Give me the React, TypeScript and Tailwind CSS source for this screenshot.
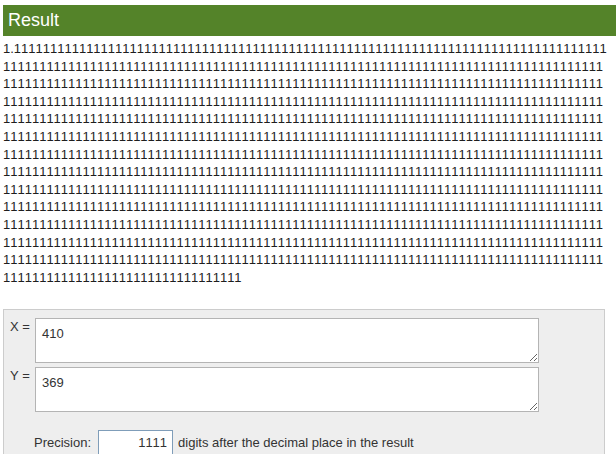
import { useState } from 'react';

const result = '1.' + '1'.repeat(1111);

export default function App() {
  const [x, setX] = useState('410');
  const [y, setY] = useState('369');
  const [precision, setPrecision] = useState('1111');

  return (
    <div className="w-[616px] h-[454px] overflow-hidden bg-white font-['Liberation_Sans',Arial,sans-serif] text-[#222] [font-kerning:none]">
      <div className="pt-[5px] pl-[3px]">
        <h2 className="h-[31px] bg-[#548329] pl-[5px] text-[18px] leading-[31px] text-white">
          Result
        </h2>
      </div>

      <div className="mt-[4px] w-[608px] pl-[3px] break-all text-[13px] leading-[17.6px] text-[#1e1e1e]">
        {result}
      </div>

      <form className="mt-[23px] ml-[3px] w-[602px] border border-[#cccccc] bg-[#eeeeee] pt-[8px] pl-[6px] pb-4 text-[13px] text-[#333]">
        <div className="flex items-start gap-[4px]">
          <label className="w-[21px] pt-[1px] leading-[15px] whitespace-nowrap">X =</label>
          <textarea
            value={x}
            onChange={(e) => setX(e.target.value)}
            className="h-[45px] w-[504px] border border-[#b4b4b4] bg-white px-[6px] pt-[7px] text-[13px] leading-[15px] text-[#333] outline-none"
          />
        </div>
        <div className="mt-[4px] flex items-start gap-[4px]">
          <label className="w-[21px] pt-[1px] leading-[15px] whitespace-nowrap">Y =</label>
          <textarea
            value={y}
            onChange={(e) => setY(e.target.value)}
            className="h-[45px] w-[504px] border border-[#b4b4b4] bg-white px-[6px] pt-[7px] text-[13px] leading-[15px] text-[#333] outline-none"
          />
        </div>
        <div className="mt-[18px] ml-[24px] flex items-center gap-[5px]">
          <span className="mr-[2px]">Precision:</span>
          <input
            value={precision}
            onChange={(e) => setPrecision(e.target.value)}
            className="h-[25px] w-[75px] border border-[#7f9db9] bg-white pr-[5px] text-right text-[13px] text-[#333] outline-none"
          />
          <span>digits after the decimal place in the result</span>
        </div>
      </form>
    </div>
  );
}
